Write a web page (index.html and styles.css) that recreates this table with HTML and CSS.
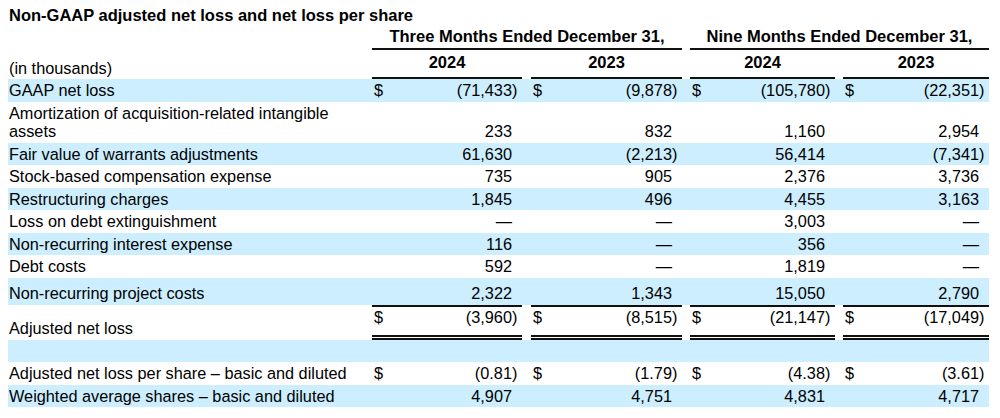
FILE: index.html
```html
<!DOCTYPE html>
<html>
<head>
<meta charset="utf-8">
<title>Non-GAAP adjusted net loss</title>
<link rel="stylesheet" href="styles.css">
</head>
<body>
<div class="page">
  <h1 class="title">Non-GAAP adjusted net loss and net loss per share</h1>
  <table class="fin">
    <colgroup>
      <col class="c-label"><col class="c-cur"><col class="c-v1"><col class="c-gap1">
      <col class="c-cur"><col class="c-v2"><col class="c-gap">
      <col class="c-cur"><col class="c-v3"><col class="c-gap">
      <col class="c-cur"><col class="c-v4">
    </colgroup>
    <thead>
      <tr class="period">
        <th></th>
        <th colspan="5" class="ul">Three Months Ended December 31,</th>
        <th></th>
        <th colspan="5" class="ul">Nine Months Ended December 31,</th>
      </tr>
      <tr class="years">
        <th class="unit">(in thousands)</th>
        <th colspan="2" class="ul">2024</th><th></th>
        <th colspan="2" class="ul">2023</th><th></th>
        <th colspan="2" class="ul">2024</th><th></th>
        <th colspan="2" class="ul">2023</th>
      </tr>
    </thead>
    <tbody>
      <tr class="b">
        <td class="lbl">GAAP net loss</td>
        <td class="cur">$</td><td class="v">(71,433<span class="rp">)</span></td><td></td>
        <td class="cur">$</td><td class="v">(9,878<span class="rp">)</span></td><td></td>
        <td class="cur">$</td><td class="v">(105,780<span class="rp">)</span></td><td></td>
        <td class="cur">$</td><td class="v">(22,351<span class="rp">)</span></td>
      </tr>
      <tr>
        <td class="lbl">Amortization of acquisition-related intangible assets</td>
        <td class="cur"></td><td class="v">233</td><td></td>
        <td class="cur"></td><td class="v">832</td><td></td>
        <td class="cur"></td><td class="v">1,160</td><td></td>
        <td class="cur"></td><td class="v">2,954</td>
      </tr>
      <tr class="b">
        <td class="lbl">Fair value of warrants adjustments</td>
        <td class="cur"></td><td class="v">61,630</td><td></td>
        <td class="cur"></td><td class="v">(2,213<span class="rp">)</span></td><td></td>
        <td class="cur"></td><td class="v">56,414</td><td></td>
        <td class="cur"></td><td class="v">(7,341<span class="rp">)</span></td>
      </tr>
      <tr>
        <td class="lbl">Stock-based compensation expense</td>
        <td class="cur"></td><td class="v">735</td><td></td>
        <td class="cur"></td><td class="v">905</td><td></td>
        <td class="cur"></td><td class="v">2,376</td><td></td>
        <td class="cur"></td><td class="v">3,736</td>
      </tr>
      <tr class="b">
        <td class="lbl">Restructuring charges</td>
        <td class="cur"></td><td class="v">1,845</td><td></td>
        <td class="cur"></td><td class="v">496</td><td></td>
        <td class="cur"></td><td class="v">4,455</td><td></td>
        <td class="cur"></td><td class="v">3,163</td>
      </tr>
      <tr>
        <td class="lbl">Loss on debt extinguishment</td>
        <td class="cur"></td><td class="v">—</td><td></td>
        <td class="cur"></td><td class="v">—</td><td></td>
        <td class="cur"></td><td class="v">3,003</td><td></td>
        <td class="cur"></td><td class="v">—</td>
      </tr>
      <tr class="b">
        <td class="lbl">Non-recurring interest expense</td>
        <td class="cur"></td><td class="v">116</td><td></td>
        <td class="cur"></td><td class="v">—</td><td></td>
        <td class="cur"></td><td class="v">356</td><td></td>
        <td class="cur"></td><td class="v">—</td>
      </tr>
      <tr>
        <td class="lbl">Debt costs</td>
        <td class="cur"></td><td class="v">592</td><td></td>
        <td class="cur"></td><td class="v">—</td><td></td>
        <td class="cur"></td><td class="v">1,819</td><td></td>
        <td class="cur"></td><td class="v">—</td>
      </tr>
      <tr class="b tall">
        <td class="lbl">Non-recurring project costs</td>
        <td class="cur"></td><td class="v">2,322</td><td></td>
        <td class="cur"></td><td class="v">1,343</td><td></td>
        <td class="cur"></td><td class="v">15,050</td><td></td>
        <td class="cur"></td><td class="v">2,790</td>
      </tr>
      <tr class="total">
        <td class="lbl">Adjusted net loss</td>
        <td class="cur">$</td><td class="v">(3,960<span class="rp">)</span></td><td></td>
        <td class="cur">$</td><td class="v">(8,515<span class="rp">)</span></td><td></td>
        <td class="cur">$</td><td class="v">(21,147<span class="rp">)</span></td><td></td>
        <td class="cur">$</td><td class="v">(17,049<span class="rp">)</span></td>
      </tr>
      <tr class="b">
        <td class="lbl">&nbsp;</td>
        <td></td><td></td><td></td>
        <td></td><td></td><td></td>
        <td></td><td></td><td></td>
        <td></td><td></td>
      </tr>
      <tr>
        <td class="lbl">Adjusted net loss per share – basic and diluted</td>
        <td class="cur">$</td><td class="v">(0.81<span class="rp">)</span></td><td></td>
        <td class="cur">$</td><td class="v">(1.79<span class="rp">)</span></td><td></td>
        <td class="cur">$</td><td class="v">(4.38<span class="rp">)</span></td><td></td>
        <td class="cur">$</td><td class="v">(3.61<span class="rp">)</span></td>
      </tr>
      <tr class="b">
        <td class="lbl">Weighted average shares – basic and diluted</td>
        <td class="cur"></td><td class="v">4,907</td><td></td>
        <td class="cur"></td><td class="v">4,751</td><td></td>
        <td class="cur"></td><td class="v">4,831</td><td></td>
        <td class="cur"></td><td class="v">4,717</td>
      </tr>
    </tbody>
  </table>
</div>
</body>
</html>
```

FILE: styles.css
```css
html, body {
  margin: 0;
  padding: 0;
  background: #ffffff;
}

body {
  font-family: "Liberation Sans", Arial, sans-serif;
  color: #000000;
}

.page {
  padding: 6px 0 0 8px;
}

.title {
  margin: 0;
  font-size: 16.5px;
  font-weight: bold;
  line-height: 19px;
  padding-left: 1px;
}

.fin {
  border-collapse: separate;
  border-spacing: 0;
  table-layout: fixed;
  width: 981px;
  font-size: 16.3px;
  line-height: 18.5px;
}

.c-label { width: 364px; }
.c-cur { width: 30px; }
.c-v1 { width: 120px; }
.c-gap1 { width: 9px; }
.c-v2 { width: 121px; }
.c-gap { width: 8px; }
.c-v3 { width: 115px; }
.c-v4 { width: 116px; }

.fin th {
  padding: 0;
  font-size: 16.5px;
  font-weight: bold;
  text-align: center;
  white-space: nowrap;
}

.fin .ul {
  border-bottom: 2px solid #111111;
}

.period th {
  padding: 2px 0 2px;
  vertical-align: top;
}

.years th {
  padding: 3px 0 6px;
  vertical-align: top;
}

.years .unit {
  font-size: 16.3px;
  font-weight: normal;
  text-align: left;
  vertical-align: bottom;
  padding: 0 0 1.5px 1px;
}

.fin td {
  padding: 2px 0;
  vertical-align: bottom;
  white-space: nowrap;
}

.fin td.lbl {
  padding-left: 1px;
  white-space: normal;
}

.fin td.cur {
  padding-left: 2px;
  text-align: left;
}

.fin td.v {
  text-align: right;
  padding-right: 10px;
}

.rp {
  margin-right: -5.4px;
}

.b td {
  background: #cceeff;
}

.tall td {
  padding-top: 6.5px;
}

.total td.cur,
.total td.v {
  border-top: 2px solid #111111;
  border-bottom: 5px double #111111;
  vertical-align: top;
  padding-top: 1px;
  padding-bottom: 8.5px;
}

.total td.lbl {
  padding-top: 14px;
  padding-bottom: 2.5px;
}
```
